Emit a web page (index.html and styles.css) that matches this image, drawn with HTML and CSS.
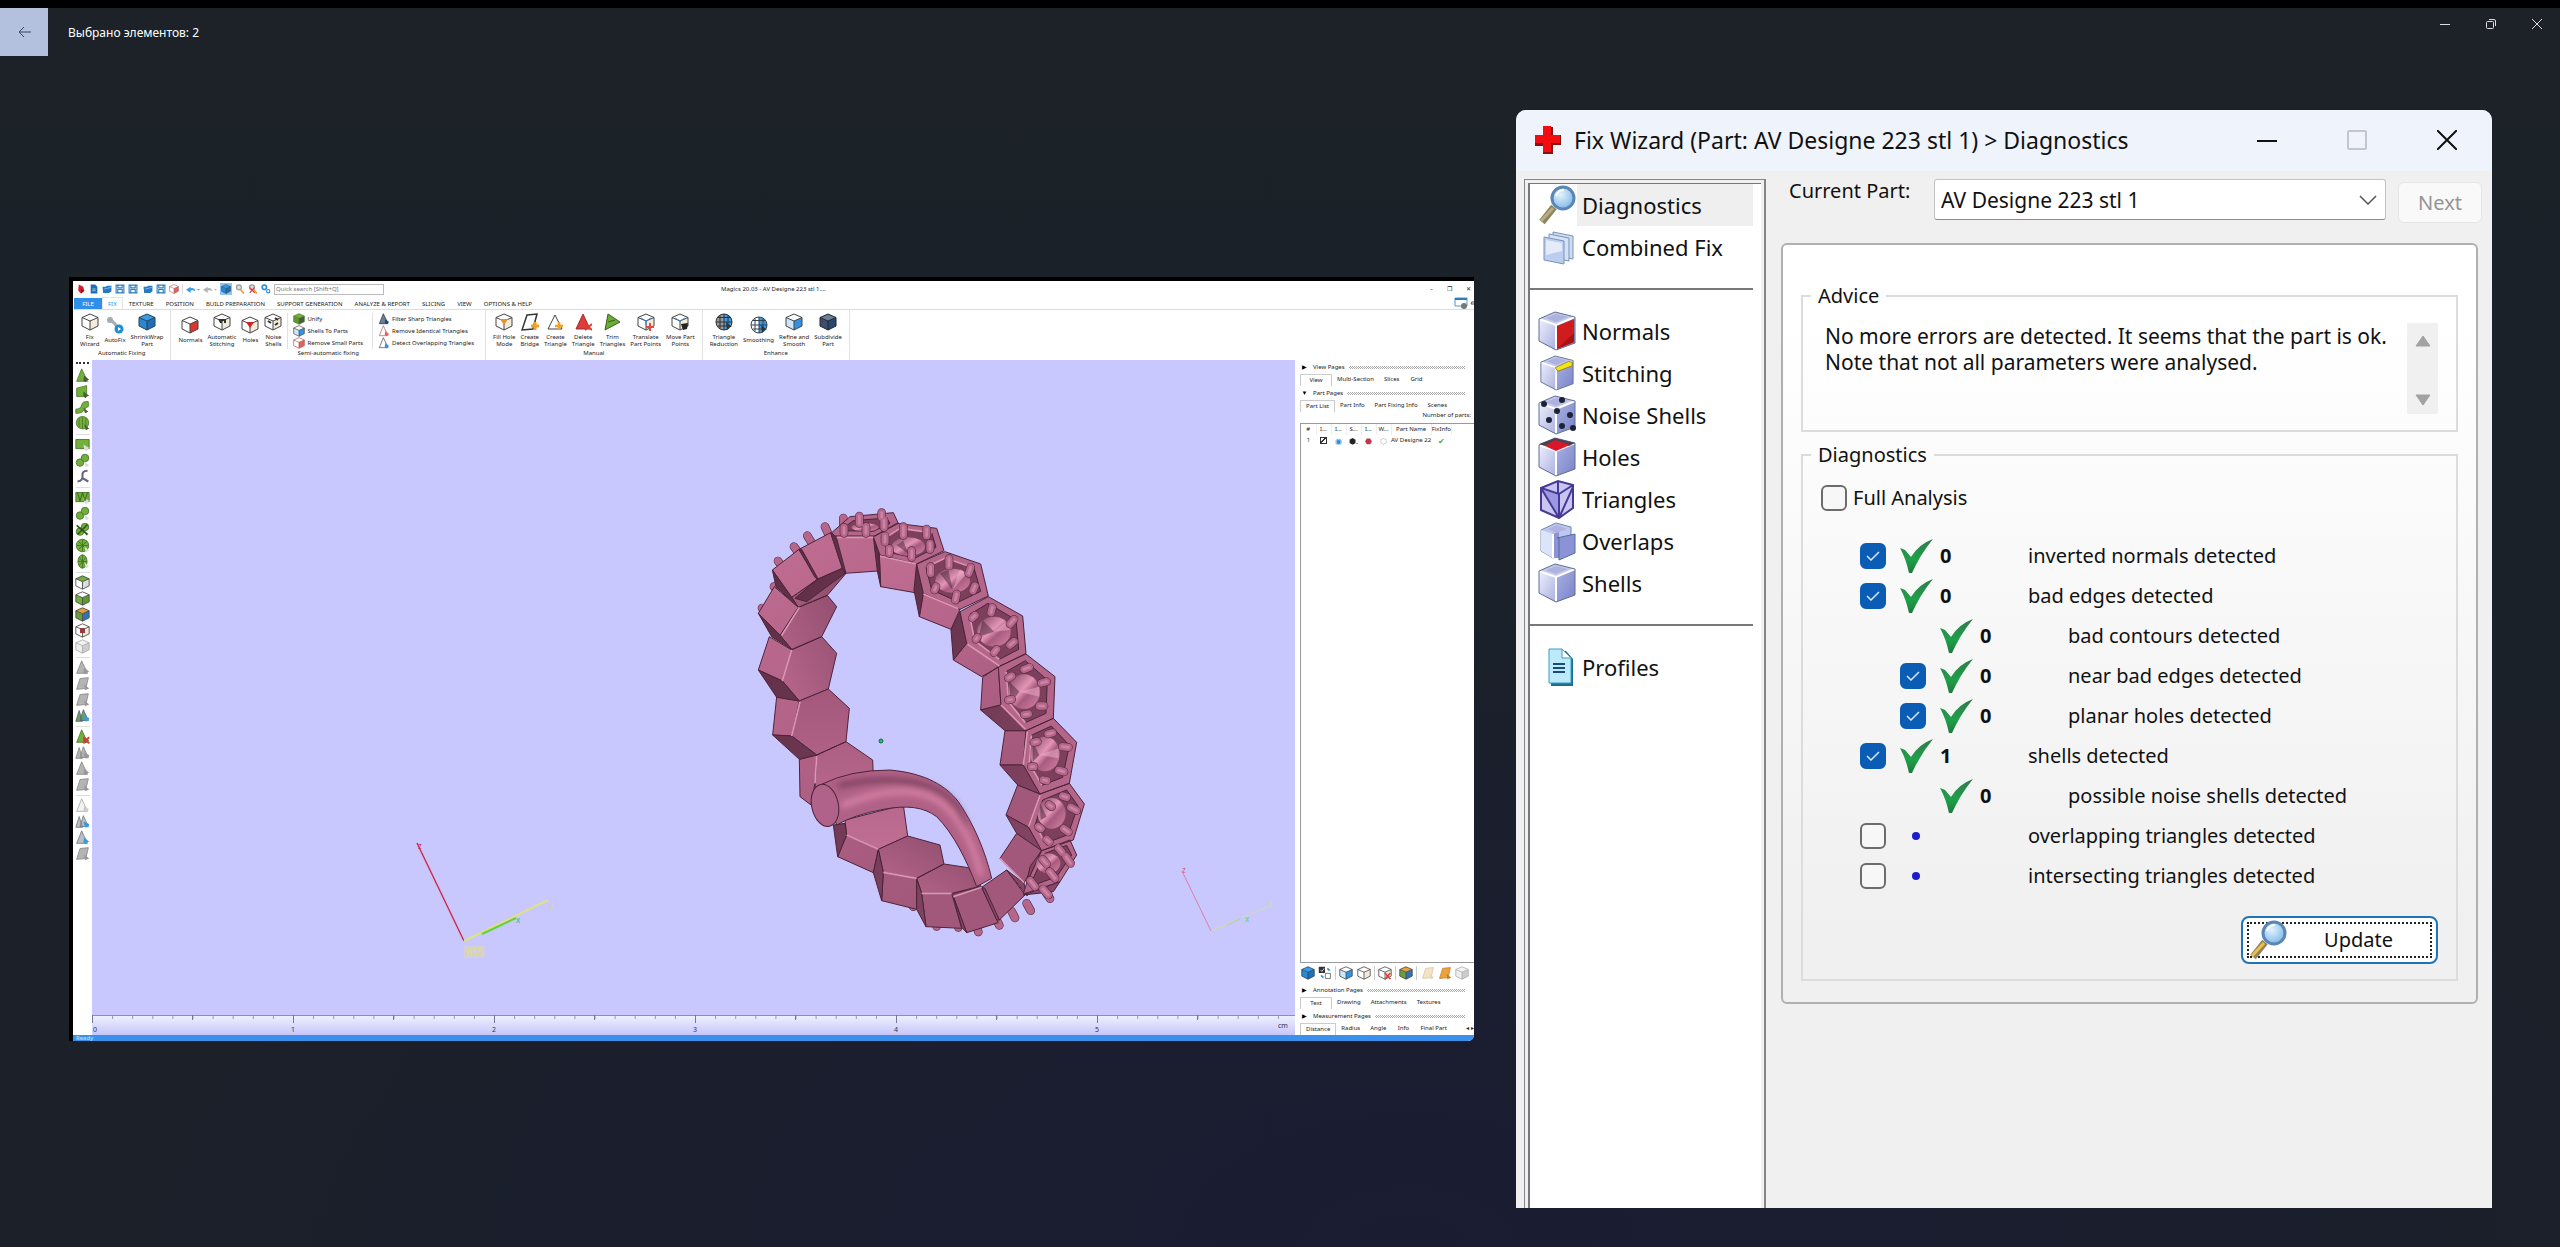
FILE: index.html
```html
<!DOCTYPE html>
<html lang="ru">
<head>
<meta charset="utf-8">
<title>Выбрано элементов: 2</title>
<link rel="stylesheet" href="styles.css">
</head>
<body>
<svg class="defs" aria-hidden="true">
  <defs>
    <linearGradient id="faceFront" x1="0" y1="0" x2="0.4" y2="1"><stop offset="0" stop-color="#c06d92"/><stop offset="1" stop-color="#a2587b"/></linearGradient>
    <linearGradient id="faceInner" x1="1" y1="0" x2="0" y2="1"><stop offset="0" stop-color="#8a4a69"/><stop offset="1" stop-color="#b9678d"/></linearGradient>
    <linearGradient id="faceWarm" x1="0" y1="0" x2="0" y2="1"><stop offset="0" stop-color="#a3587b"/><stop offset="1" stop-color="#c06e93"/></linearGradient>
    <linearGradient id="faceDark" x1="0" y1="0" x2="1" y2="1"><stop offset="0" stop-color="#5a2c43"/><stop offset="1" stop-color="#8a4868"/></linearGradient>
    <linearGradient id="gem" x1="0" y1="0" x2="1" y2="1"><stop offset="0" stop-color="#7a3e5b"/><stop offset="0.45" stop-color="#e295b5"/><stop offset="0.6" stop-color="#a85b80"/><stop offset="1" stop-color="#d583a6"/></linearGradient>
    <linearGradient id="rule" x1="0" y1="0" x2="0" y2="1"><stop offset="0" stop-color="#f1f1ff"/><stop offset="1" stop-color="#c6c6fa"/></linearGradient>
    <linearGradient id="cubeLeft" x1="0" y1="0" x2="1" y2="1"><stop offset="0" stop-color="#eef0fc"/><stop offset="1" stop-color="#a9b0e0"/></linearGradient>
    <linearGradient id="cubeRight" x1="0" y1="0" x2="1" y2="1"><stop offset="0" stop-color="#aab2e4"/><stop offset="1" stop-color="#7a82c8"/></linearGradient>
    <radialGradient id="lens" cx="0.4" cy="0.35" r="0.7"><stop offset="0" stop-color="#e2f3fd"/><stop offset="1" stop-color="#7db6e8"/></radialGradient>
    <linearGradient id="tick" x1="0" y1="0" x2="0" y2="1"><stop offset="0" stop-color="#2f7a4c"/><stop offset="0.6" stop-color="#1fa04a"/><stop offset="1" stop-color="#1d7a3c"/></linearGradient>
    <filter id="soft"><feGaussianBlur stdDeviation="9"/></filter>
    <path id="backprongs" d="M310 84v22M255 110l10 22M202 137l12 20M162 170l12 16M114 213l12 16M102 290l8 8M66 354l4 4M590 1309v-12M655 1312v-12M715 1326l-4-16M778 1306l-6-12M825 1284l-10-20M872 1262l-12-22M930 1226l-16-24M520 1250v-8"/>
    <path id="prongs" d="M358 78v22M425 68v14M432 90v22M312 112v18M378 110v20M490 110v26M560 117v20M570 160v18M515 182v20M448 176v14M435 138v18M627 206v22M692 232l-6 18M705 288l-6 14M650 312l-4 18M588 290l-4 10M572 230v20M757 352l-4 16M822 388l-12 14M822 455l-12 10M770 478l-8 10M712 442l-4 6M705 376l-8 8M868 532l-16 6M920 575l-16 4M912 648l-14 0M865 672l-12 2M815 628l-10 2M815 558l-10 6M938 728l-14 4M985 772l-18-2M972 845l-16-4M920 872l-10-2M882 830l-8 0M892 755l-10 2M980 922l-12-4M1010 962l-18-10M985 1026l-14-10M928 1056l-8-8M903 1016l-8-6M935 950l-8-6M965 1086l-10-12M992 1120l-14-20M945 1165l-16-20M920 1122l-12-14M885 1190l-14-18M925 1215l-16-18"/>
  </defs>
  <symbol id="box" viewBox="0 0 18 18">
    <path d="M9 1 17 4.500 17 13 9 17 1 13 1 4.500Z" fill="#fff"/>
    <path class="t" d="M9 1 17 4.500 9 8 1 4.500Z"/><path class="l" d="M1 4.500 9 8 9 17 1 13Z"/><path class="r" d="M17 4.500 9 8 9 17 17 13Z"/>
    <path class="o" d="M9 1 17 4.500 17 13 9 17 1 13 1 4.500ZM1 4.500 9 8 17 4.500M9 8V17"/>
  </symbol>
  <symbol id="tri" viewBox="0 0 18 18"><path class="t o" d="M8 1 15 16 2 16Z"/><path class="r" d="M11 9 17 14 14 15 13 17 10 15Z"/></symbol>
  <symbol id="tris" viewBox="0 0 18 18"><path class="t o" d="M5 3 9 16H1ZM10 2 16 15H6Z"/><path class="r" d="M10 9 17 12 16 16 12 16Z"/></symbol>
  <symbol id="quad" viewBox="0 0 18 18"><path class="t o" d="M6 3 16 2 13 15 2 16Z"/><path class="r" d="M11 10 17 15 12 17Z"/></symbol>
  <symbol id="sheet" viewBox="0 0 18 18"><path class="t o" d="M2 5 14 2V15L2 15Z"/><path class="r" d="M10 9 17 14 14 15 13 17 10 15Z"/></symbol>
  <symbol id="rect" viewBox="0 0 18 18"><path class="t o" d="M1 3H17V14H1Z"/><path class="r" d="M10 9 17 13 14 17 11 15Z"/></symbol>
  <symbol id="wave" viewBox="0 0 18 18"><path class="t o" d="M1 11Q7 11 8 6T16 2V8Q13 8 11 12T1 16Z"/><path class="r" d="M10 9 16 14 12 16Z"/></symbol>
  <symbol id="blob" viewBox="0 0 18 18"><circle class="t o" cx="6" cy="11.500" r="4.500"/><circle class="t o" cx="12" cy="6" r="4.500"/><path class="r" d="M11 10 17 15 13 17Z"/></symbol>
  <symbol id="disc" viewBox="0 0 18 18"><circle class="t o" cx="9" cy="9" r="7.500"/><path class="o" d="M9 2V16M2 9H16M4 4 14 14M14 4 4 14"/><path class="r" d="M11 10 17 15 13 17Z"/></symbol>
  <symbol id="slices" viewBox="0 0 18 18"><circle class="t o" cx="9" cy="8" r="7.500"/><path class="o" d="M5 2V14M9 1V15M13 2V14"/><path class="r" d="M11 10 17 15 13 17Z"/></symbol>
  <symbol id="oval" viewBox="0 0 18 18"><ellipse class="t o" cx="9" cy="9" rx="5.500" ry="8"/><path class="o" d="M9 1V17M4 9H14M5 4 13 14M13 4 5 14"/><path class="r" d="M11 10 17 15 13 17Z"/></symbol>
  <symbol id="curve" viewBox="0 0 18 18"><path d="M3 15Q10 14 9 8T15 2M9 11 16 15" fill="none" stroke="#667" stroke-width="2.500"/></symbol>
  <symbol id="globe" viewBox="0 0 18 18"><circle cx="9" cy="9" r="8" class="l"/><path class="t" d="M9 1A8 8 0 0 1 9 17Z"/><path class="o" d="M9 1A8 8 0 0 1 9 17A8 8 0 0 1 9 1V17M1 9H17M3 4.500H15M3 13H15M5 2.500V15.500M13 2.500V15.500"/><path d="M11 9 17 14 14 14 12 17Z" fill="#333"/></symbol>
  <symbol id="disk" viewBox="0 0 18 18"><path d="M2 2H16V16H2ZM5 2V7H13V2M5 16V10H13V16" fill="none" stroke="#2c7dc0" stroke-width="2"/></symbol>
  <symbol id="page" viewBox="0 0 18 18"><path d="M3 1H11L15 5V17H3Z" fill="#1f6fb8"/><path d="M6 9H12M6 12H12" stroke="#fff"/></symbol>
  <symbol id="folder" viewBox="0 0 18 18"><path d="M1 5H7L9 3H17V13L13 16H2Z" fill="#2379c4"/><path d="M4 9 17 6" stroke="#bfe0ff"/></symbol>
  <symbol id="wrench" viewBox="0 0 18 18"><path d="M3 2 9 8 11 11" fill="none" stroke="#a5acb3" stroke-width="3"/><circle cx="4" cy="4" r="3" fill="#a5acb3"/><circle cx="13" cy="13" r="4.500" fill="#1b8fd8"/><path d="M12 11 15 13 12 15Z" fill="#fff"/></symbol>
  <symbol id="lens-s" viewBox="0 0 18 18"><path d="M10 10 16 17" stroke="#e0a23c" stroke-width="3"/><circle cx="7" cy="6" r="4.500" fill="#ddd" stroke="#999" stroke-width="2"/></symbol>
  <symbol id="gears" viewBox="0 0 18 18"><circle cx="6" cy="6" r="4" fill="none" stroke="#2a8fd6" stroke-width="3"/><circle cx="13" cy="13" r="3" fill="none" stroke="#2a8fd6" stroke-width="2"/></symbol>
  <symbol id="arrow" viewBox="0 0 18 10"><path d="M0 6 6 2V4Q11 3 12 8Q9 6 6 7V10ZM14 5H18L16 7Z" class="t"/></symbol>
  <symbol id="magnifier" viewBox="0 0 38 40">
    <path d="M16 22 4 37" stroke="#8d8560" stroke-width="7"/><path class="handle" d="M15 23 3 36" stroke-width="3"/>
    <circle cx="25" cy="13" r="11" fill="url(#lens)" stroke="#5a86b4" stroke-width="3"/><path d="M18 11Q20 5 26 5" fill="none" stroke="#fff" stroke-width="2"/>
  </symbol>
  <symbol id="cube" viewBox="0 0 38 40">
    <path d="M1 8 17 1 37 6 37 32 18 39 1 30Z" fill="#c9cff0"/>
    <path d="M1 8 17 1 37 6 18 14Z" fill="#c4c9ec"/><path d="M1 8 18 14V39L1 30Z" fill="url(#cubeLeft)"/><path d="M37 6 18 14V39L37 32Z" fill="url(#cubeRight)"/>
    <path d="M8 7 18 3 30 6 18 11Z" fill="#aeb2de"/>
    <path d="M1 8 18 14 37 6M18 14V39" fill="none" stroke="#fff" stroke-width="2"/>
    <path d="M1 8 17 1 37 6V32L18 39 1 30Z" fill="none" stroke="#5f6f90"/>
  </symbol>
  <symbol id="tickmark" viewBox="0 0 33 34"><path d="M0 9 5 11 11 18Q19 5 33 0Q20 16 12 34L9 34Q6 20 0 9Z" fill="url(#tick)"/></symbol>
</svg>

<header class="topbar">
  <button class="back" aria-label="Назад"><svg width="13" height="12" viewBox="0 0 13 12"><path d="M13 6H1M6 1 1 6 6 11" fill="none" stroke="#3a4560" stroke-width="1"/></svg></button>
  <h1 class="topbar-title">Выбрано элементов: 2</h1>
  <div class="winbtns">
    <button aria-label="Свернуть"><svg width="10" height="10"><path d="M0 5.500H10" stroke="#ddd"/></svg></button>
    <button aria-label="Восстановить"><svg width="10" height="10" fill="none" stroke="#ddd"><rect x="0.500" y="2.500" width="7" height="7" rx="1"/><path d="M3 .5H8Q9.500 .5 9.500 2V7"/></svg></button>
    <button aria-label="Закрыть"><svg width="10" height="10"><path d="M0 0 10 10M10 0 0 10" stroke="#ddd"/></svg></button>
  </div>
</header>

<main class="stage">
  <section class="shot" aria-label="Magics">
    <div class="app">
      <div class="app-title">
        <div class="quick">
          <svg class="qi" viewBox="0 0 18 18"><path d="M5 1 13 5 15 12 9 17 4 12Z" fill="#d5202a"/><path d="M9 9 15 12 9 17Z" fill="#8d1018"/></svg>
          <svg class="qi"><use href="#page"/></svg>
          <svg class="qi"><use href="#folder"/></svg>
          <svg class="qi"><use href="#disk"/></svg>
          <svg class="qi"><use href="#disk"/></svg>
          <svg class="qi wide"><use href="#folder"/></svg>
          <svg class="qi"><use href="#disk"/></svg>
          <svg class="qi c-rose"><use href="#box"/></svg>
          <i class="vsep"></i>
          <svg class="qa c-blue"><use href="#arrow"/></svg>
          <svg class="qa c-gray"><use href="#arrow"/></svg>
          <svg class="qi c-blue sel"><use href="#box"/></svg>
          <svg class="qi"><use href="#lens-s"/></svg>
          <svg class="qi" viewBox="0 0 18 18"><use href="#lens-s"/><path d="M3 6 12 16M12 6 3 16" stroke="#d33" stroke-width="2"/></svg>
          <svg class="qi"><use href="#gears"/></svg>
          <input class="qsearch" aria-label="Quick search" placeholder="Quick search [Shift+Q]">
        </div>
        <span class="app-name">Magics 20.03 - AV Designe 223 stl 1....</span>
        <span class="app-win"><span>–</span><span>❐</span><span>✕</span></span>
      </div>
      <nav class="tabs">
        <a class="file" href="#">FILE</a><a class="on" href="#">FIX</a><a href="#">TEXTURE</a><a href="#">POSITION</a><a href="#">BUILD PREPARATION</a><a href="#">SUPPORT GENERATION</a><a href="#">ANALYZE &amp; REPORT</a><a href="#">SLICING</a><a href="#">VIEW</a><a href="#">OPTIONS &amp; HELP</a>
        <svg class="panelbtn" viewBox="0 0 20 12"><path d="M1 1H13V9H1Z" fill="#fff" stroke="#4a9ad0"/><path d="M1 2H13" stroke="#2a7fc0" stroke-width="2"/><circle cx="10" cy="9" r="3" fill="#777"/><path d="M20 5Q17 4 17 7H20" fill="none" stroke="#555"/></svg>
      </nav>
      <div class="ribbon">
        <div class="group"><div class="tools">
          <button><svg class="ri c-plain"><use href="#box"/></svg>Fix<br>Wizard</button>
          <button><svg class="ri"><use href="#wrench"/></svg>AutoFix</button>
          <button><svg class="ri c-blue"><use href="#box"/></svg>ShrinkWrap<br>Part</button>
        </div><p>Automatic Fixing</p></div>
        <div class="group"><div class="tools">
          <button><svg class="ri c-red"><use href="#box"/></svg>Normals</button>
          <button><svg class="ri c-plain" viewBox="0 0 18 18"><use href="#box"/><path d="M5 6H13V10H11V8H9V10H7" fill="#333"/></svg>Automatic<br>Stitching</button>
          <button><svg class="ri c-plain" viewBox="0 0 18 18"><use href="#box"/><path d="M5 6H13L9 12Z" fill="#c22"/></svg>Holes</button>
          <button><svg class="ri c-plain" viewBox="0 0 18 18"><use href="#box"/><path d="M4 8 7 10M11 5 14 7M11 12 14 10" stroke="#333" stroke-width="2"/></svg>Noise<br>Shells</button>
          <div class="list">
            <button><svg class="li c-green"><use href="#box"/></svg>Unify</button>
            <button><svg class="li c-sky"><use href="#box"/></svg>Shells To Parts</button>
            <button><svg class="li c-rose"><use href="#box"/></svg>Remove Small Parts</button>
          </div>
          <div class="list">
            <button><svg class="li c-navy"><use href="#tri"/></svg>Filter Sharp Triangles</button>
            <button><svg class="li c-rose"><use href="#tri"/></svg>Remove Identical Triangles</button>
            <button><svg class="li c-sky"><use href="#tri"/></svg>Detect Overlapping Triangles</button>
          </div>
        </div><p>Semi-automatic fixing</p></div>
        <div class="group"><div class="tools">
          <button><svg class="ri c-plain" viewBox="0 0 18 18"><use href="#box"/><path d="M5 6H13L9 12Z" fill="#e8912c"/></svg>Fill Hole<br>Mode</button>
          <button><svg class="ri" viewBox="0 0 18 18"><path d="M6 2 16 1 12 16 1 17Z" fill="#fff" stroke="#333" stroke-width="1.500"/><path d="M14 9V17M10 13H18" stroke="#f0a02c" stroke-width="3"/></svg>Create<br>Bridge</button>
          <button><svg class="ri" viewBox="0 0 18 18"><path d="M9 2 16 16H2Z" fill="#fff" stroke="#444"/><path d="M13 9V17M9 13H17" stroke="#f0a02c" stroke-width="2.500"/></svg>Create<br>Triangle</button>
          <button><svg class="ri" viewBox="0 0 18 18"><path d="M9 1 16 16H2Z" fill="#e03b34" stroke="#933"/><path d="M11 11 18 17M18 11 11 17" stroke="#e03b34" stroke-width="2"/></svg>Delete<br>Triangle</button>
          <button><svg class="ri" viewBox="0 0 18 18"><path d="M5 1 17 9 2 17ZM5 9 12 7" fill="#6cab36" stroke="#35601c"/></svg>Trim<br>Triangles</button>
          <button><svg class="ri c-plain" viewBox="0 0 18 18"><use href="#box"/><path d="M4 5 9 8 14 5M9 8V12" fill="none" stroke="#38d"/><path d="M13 10V18M9 14H17" stroke="#e24a44" stroke-width="2"/></svg>Translate<br>Part Points</button>
          <button><svg class="ri c-plain" viewBox="0 0 18 18"><use href="#box"/><path d="M4 5 9 8 14 5" fill="none" stroke="#38d"/><path d="M10 11 17 10 16 16 12 17Z" fill="#222"/></svg>Move Part<br>Points</button>
        </div><p>Manual</p></div>
        <div class="group"><div class="tools">
          <button><svg class="ri c-globe"><use href="#globe"/></svg>Triangle<br>Reduction</button>
          <button><svg class="ri c-globe2"><use href="#globe"/></svg>Smoothing</button>
          <button><svg class="ri c-sky"><use href="#box"/></svg>Refine and<br>Smooth</button>
          <button><svg class="ri c-navy"><use href="#box"/></svg>Subdivide<br>Part</button>
        </div><p>Enhance</p></div>
      </div>
      <div class="work">
        <div class="rail">
          <i class="grip"></i>
          <svg class="c-green"><use href="#tri"/></svg><svg class="c-green"><use href="#sheet"/></svg><svg class="c-green"><use href="#wave"/></svg><svg class="c-green"><use href="#slices"/></svg>
          <i class="hsep"></i>
          <svg class="c-green2"><use href="#rect"/></svg><svg class="c-green2"><use href="#blob"/></svg><svg><use href="#curve"/></svg>
          <i class="hsep"></i>
          <svg class="c-green2" viewBox="0 0 18 18"><use href="#rect"/><path d="M3 3 6 13 9 3 12 13 15 3" fill="none" stroke="#2d5517"/></svg><svg class="c-green2"><use href="#blob"/></svg><svg class="c-green2" viewBox="0 0 18 18"><use href="#blob"/><path d="M2 4 15 15M3 15 15 3" stroke="#2d5517" stroke-width="2"/></svg><svg class="c-green2"><use href="#disc"/></svg><svg class="c-green2"><use href="#oval"/></svg>
          <i class="hsep"></i>
          <svg class="c-topgreen"><use href="#box"/></svg><svg class="c-sidegreen"><use href="#box"/></svg><svg class="c-multi"><use href="#box"/></svg><svg class="c-plain" viewBox="0 0 18 18"><use href="#box"/><path d="M6 6H12V12H6Z" fill="#844"/><path d="M6 7 12 12M12 7 6 12" stroke="#a33"/></svg><svg class="c-pale"><use href="#box"/></svg>
          <i class="hsep"></i>
          <svg class="c-gray"><use href="#tri"/></svg><svg class="c-gray"><use href="#quad"/></svg><svg class="c-gray"><use href="#quad"/></svg><svg class="c-teal"><use href="#tris"/></svg>
          <i class="hsep"></i>
          <svg class="c-green" viewBox="0 0 18 18"><use href="#tri"/><path d="M10 10 17 17M17 10 10 17" stroke="#e03b34" stroke-width="2.500"/></svg><svg class="c-gray"><use href="#tris"/></svg><svg class="c-gray"><use href="#tri"/></svg><svg class="c-gray"><use href="#quad"/></svg>
          <i class="hsep"></i>
          <svg class="c-pale"><use href="#tri"/></svg><svg class="c-skygray"><use href="#tris"/></svg><svg class="c-skygray"><use href="#tri"/></svg><svg class="c-gray"><use href="#quad"/></svg>
        </div>
        <svg class="scene" viewBox="0 0 1203 675" preserveAspectRatio="xMinYMin slice">
          <g transform="translate(648 130) scale(.33333)" stroke="#4c2338" stroke-width="3" stroke-linejoin="round">
            <g class="prong"><use href="#backprongs" class="prong-edge"/><use href="#backprongs" class="prong-body"/></g>
            <path fill="url(#faceInner)" d="M155 322 232 268 307 235 318 250 262 316 175 352ZM175 352 262 316 290 350 245 440 155 478 120 436ZM155 480 245 440 290 490 265 597 178 633 127 573Z"/>
            <path fill="url(#faceWarm)" d="M178 633 265 597 328 655 318 755 230 795 155 738ZM230 795 318 755 398 810 400 860 225 900ZM315 990 490 945 503 1038 415 1078 320 1035Z"/>
            <path fill="url(#faceInner)" d="M415 1078 503 1038 600 1065 612 1122 530 1165 430 1147ZM530 1165 612 1122 685 1133 722 1188 638 1210 545 1210Z"/>
            <path fill="url(#faceFront)" d="M285 138H405L415 243 315 250ZM177 178 272 128 307 235 232 268ZM97 240 177 178 232 268 155 322ZM55 370 103 290 175 352 120 436ZM55 540 88 440 155 480 127 573ZM98 735 110 620 178 633 155 738ZM178 808 230 795 225 880 213 945 180 920ZM293 1100 320 1035 415 1078 400 1148ZM430 1147 530 1165V1258L425 1232ZM545 1210H635L665 1315 558 1310ZM640 1220 725 1192 775 1298 680 1328ZM725 1192 800 1140 855 1215 778 1290ZM780 1105 830 1030 905 1080 852 1180Z"/>
            <path fill="url(#faceDark)" d="M97 240 155 322 175 352 108 290ZM55 370 120 436 155 478 95 440ZM55 540 127 573 178 633 110 622ZM98 735 155 738 230 795 178 808ZM280 1005 315 1000 320 1035 293 1100ZM415 1078 430 1147 425 1232 400 1148ZM530 1165 545 1210 558 1310 530 1258ZM638 1210 725 1190 640 1220ZM640 1220 680 1328 665 1312ZM725 1192 735 1195 778 1290 770 1290ZM177 178 185 178 235 268 225 262ZM272 128 288 138 318 250 307 235ZM800 1140 852 1180 862 1218ZM232 268 307 235 315 250 200 335 165 325Z"/>
            <path fill="url(#faceFront)" d="M418 195 530 222 525 308 422 290ZM550 310 660 358 633 418 538 380ZM680 460 778 530 725 560 640 510ZM775 530 783 645 722 660 728 562ZM795 722H858L850 825 780 825ZM833 885 900 912 866 1012 798 975Z"/>
            <path fill="url(#faceDark)" d="M400 140 418 195 422 290 412 243ZM530 222 550 310 538 380 522 300ZM660 365 680 460 640 510 633 420ZM783 645 858 722 795 722 722 660ZM780 825H850L900 912 833 885ZM798 975 866 1012 905 1082 830 1030ZM860 1180 905 1082 870 1130ZM850 1215 960 1175 940 1205Z"/>
            <path fill="#b4658a" d="M275 128 330 80 460 68 475 100 405 138H285ZM400 140 470 100 590 115 612 182 530 222 420 195ZM530 222 615 185 722 222 745 318 660 358 550 310ZM660 365 745 320 848 378 858 490 778 530 680 460ZM775 530 858 492 945 560 940 685 858 722 783 645ZM858 722 940 685 1010 757 988 880 900 912 850 825ZM900 912 988 880 1033 942 1000 1050 905 1082 866 1012ZM905 1082 990 1050 1010 1095 960 1175 850 1212 860 1180Z"/>
            <path fill="#7c405d" d="M300 122 340 92 440 84 450 100 400 124ZM434 145 480 115 575 128 588 172 526 204 440 186ZM558 232 616 204 702 234 722 304 656 336 575 300ZM688 374 744 340 828 390 836 478 778 508 704 452ZM798 545 856 512 922 570 918 670 856 698 806 636ZM874 736 934 708 988 766 968 862 906 886 868 820ZM908 930 980 900 1014 948 984 1034 916 1060 886 1004ZM915 1090 980 1066 995 1095 950 1160 870 1190 878 1168Z"/>
            <path d="M434 145 480 115 575 128M558 232 616 204 702 234M688 374 704 452 778 508M798 545 806 636 856 698M874 736 868 820 906 886M886 1004 916 1060M125 436 178 352M127 573 155 480M155 738 180 635M225 880 230 798M320 1035 415 1078M430 1147 530 1165M545 1210H635M640 1220 725 1192M290 142H400M420 198 528 222M550 312 655 356M682 462 778 528M783 645 856 718M850 825 862 725M866 1010 900 915M780 1105 852 1178" fill="none" stroke="#dc96b4" stroke-width="5"/>
            <g fill="url(#gem)" stroke="none"><ellipse cx="375" cy="112" rx="40" ry="12"/><ellipse cx="505" cy="170" rx="50" ry="28"/><ellipse cx="638" cy="272" rx="52" ry="36"/><ellipse cx="762" cy="425" rx="50" ry="45"/><ellipse cx="852" cy="605" rx="48" ry="52"/><ellipse cx="915" cy="792" rx="44" ry="52"/><ellipse cx="935" cy="970" rx="42" ry="46"/><ellipse cx="925" cy="1120" rx="36" ry="30"/></g>
            <path d="M638 300 600 250 625 240ZM762 425 716 440 728 390ZM838 605 812 640 808 575ZM898 795 878 815 878 755ZM920 980 902 990 900 940ZM505 192 470 165 490 152Z" fill="#4c2338" stroke="none" opacity=".5"/>
            <path d="M638 300 660 238 680 250ZM762 425 800 395 810 420ZM838 605 898 590 898 620ZM898 795 956 775 956 805Z" fill="#f0b4cc" stroke="none" opacity=".5"/>
            <g class="prong"><use href="#prongs" class="prong-edge"/><use href="#prongs" class="prong-body"/><use href="#prongs" class="prong-light"/></g>
            <path fill="#b06186" d="M245 883Q330 840 450 840C560 850 620 890 655 935C700 1000 735 1080 755 1165L710 1190C680 1110 640 1030 590 980C550 950 500 945 430 958Q340 975 290 1005Z"/>
            <g fill="none" stroke-linecap="round" filter="url(#soft)"><path d="M300 886Q460 852 565 890T680 1040" stroke="#733a56" stroke-width="14"/><path d="M310 945Q470 880 570 920T722 1150" stroke="#d37fa3" stroke-width="20"/></g>
            <ellipse cx="255" cy="946" rx="40" ry="64" transform="rotate(-12 255 946)" fill="#b0628a"/>
          </g>
          <circle cx="789" cy="381" r="2" fill="#4a8" stroke="#073"/>
          <g fill="none" stroke-width="1"><path d="M325 483 372 581" stroke="#e88aa8" stroke-width="2"/><path d="M325 483 372 581" stroke="#b02050"/><path d="M372 581 456 540" stroke="#e0e080" stroke-width="2"/><path d="M390 574 424 558" stroke="#5fd43c" stroke-width="2"/><path d="M1090 511 1119 571" stroke="#dd7f9f"/><path d="M1119 571 1177 546" stroke="#d9d9a8"/><path d="M1135 565 1150 558" stroke="#a8d8a8"/></g>
          <g class="axis"><text x="326" y="489" fill="#c03060">z</text><text x="457" y="548" fill="#d8d87a">y</text><text x="424" y="563" fill="#2fc46a">x</text><text x="1090" y="513" fill="#d0607f">z</text><text x="1153" y="562" fill="#5fd45f">x</text><text x="1176" y="546" fill="#d9d9a0">y</text>
            <rect x="372" y="586" width="21" height="12" fill="#d2d0dc"/><text x="373" y="595" fill="#dede7c">WCS</text></g>
          <rect y="655" width="1203" height="20" fill="url(#rule)"/><path d="M0 655.500H1203" stroke="#8f8fa8"/>
          <path d="M.5 655v8M201.500 655v8M402.500 655v8M603.500 655v8M804.500 655v8M1005.500 655v8M100.500 655v5M301.500 655v5M502.500 655v5M703.500 655v5M904.500 655v5M1105.500 655v5" stroke="#77779a"/>
          <path d="M0 657.500H1203" stroke="#77779a" stroke-width="3" stroke-dasharray="1 19.100" opacity=".7"/>
          <g class="nums"><text x="1" y="672">0</text><text x="199" y="672">1</text><text x="400" y="672">2</text><text x="601" y="672">3</text><text x="802" y="672">4</text><text x="1003" y="672">5</text><text x="1186" y="668">cm</text></g>
        </svg>
        <aside class="side">
          <h2 class="closed">View Pages</h2>
          <div class="subtabs"><a class="on" href="#">View</a><a href="#">Multi-Section</a><a href="#">Slices</a><a href="#">Grid</a></div>
          <h2 class="open">Part Pages</h2>
          <div class="subtabs"><a class="on" href="#">Part List</a><a href="#">Part Info</a><a href="#">Part Fixing Info</a><a href="#">Scenes</a></div>
          <p class="count">Number of parts:</p>
          <div class="parts">
            <table>
              <thead><tr><th>#</th><th>I...</th><th>I...</th><th>S...</th><th>I...</th><th>W...</th><th class="name">Part Name</th><th>FixInfo</th></tr></thead>
              <tbody><tr><td>1</td><td><input type="checkbox" class="mini" checked aria-label="Selected"></td><td class="eye">◉</td><td class="bk">⬢.</td><td class="rd">⬣</td><td class="gy">⬡</td><td class="name">AV Designe 22</td><td class="ok">✔</td></tr></tbody>
            </table>
          </div>
          <div class="iconrow">
            <svg class="c-blue"><use href="#box"/></svg><svg viewBox="0 0 18 18"><path d="M1 1H9V9H1Z" fill="#333"/><path d="M3 5 5 7 8 3" stroke="#fff" fill="none"/><path d="M9.500 9.500H16V16H9.500Z" fill="#fff" stroke="#555"/><path d="M12 3 15 6M4 12 7 15" stroke="#2a8fd6" stroke-width="2"/></svg><i></i>
            <svg class="c-sky"><use href="#box"/></svg><svg class="c-plain"><use href="#box"/></svg><i></i>
            <svg class="c-plain" viewBox="0 0 18 18"><use href="#box"/><path d="M9 9 16 17M16 9 9 17" stroke="#e03b34" stroke-width="2"/></svg><i></i>
            <svg class="c-multi"><use href="#box"/></svg><i></i>
            <svg class="c-cream"><use href="#quad"/></svg><svg class="c-orange"><use href="#quad"/></svg><svg class="c-pale"><use href="#box"/></svg>
          </div>
          <h2 class="closed">Annotation Pages</h2>
          <div class="subtabs"><a class="on" href="#">Text</a><a href="#">Drawing</a><a href="#">Attachments</a><a href="#">Textures</a></div>
          <h2 class="closed">Measurement Pages</h2>
          <div class="subtabs"><a class="on" href="#">Distance</a><a href="#">Radius</a><a href="#">Angle</a><a href="#">Info</a><a href="#">Final Part</a><span class="pager">◂ ▸</span></div>
        </aside>
      </div>
      <footer class="status">Ready</footer>
    </div>
  </section>

  <section class="wizard" aria-label="Fix Wizard">
    <header class="wz-title">
      <svg width="28" height="30" viewBox="0 0 28 30"><path d="M10 2H19V10H27V20H19V29H9V21H1V11H10Z" fill="#8e0f12"/><path d="M9 1H17V10H26V18H17V27H9V18H1V10H9Z" fill="#f20d10"/></svg>
      <h2>Fix Wizard (Part: AV Designe 223 stl 1) &gt; Diagnostics</h2>
      <div class="wz-btns">
        <button aria-label="Minimize"><svg width="20" height="20"><path d="M0 11H20" stroke="#111" stroke-width="2"/></svg></button>
        <button aria-label="Maximize" disabled><svg width="20" height="20"><rect x="1" y="1" width="18" height="18" rx="1" fill="none" stroke="#c3c6cf" stroke-width="2"/></svg></button>
        <button aria-label="Close"><svg width="20" height="20"><path d="M0 0 20 20M20 0 0 20" stroke="#111" stroke-width="2"/></svg></button>
      </div>
    </header>
    <div class="wz-body">
      <nav class="wz-nav">
        <div class="wz-list">
          <a class="on" href="#"><svg class="wi"><use href="#magnifier"/></svg><span>Diagnostics</span></a>
          <a href="#"><svg class="wi" viewBox="0 0 38 40" stroke="#7a93b5"><path d="M15 5 35 9V32L15 28Z" fill="#cfdcf4"/><path d="M11 7 31 11V34L11 30Z" fill="#d5e1f6"/><path d="M6 10 26 14V37L6 33Z" fill="#bccdef"/><path d="M8 13 24 16V24L8 28Z" fill="#e4ecfa" stroke="none"/></svg><span>Combined Fix</span></a>
          <hr>
          <a href="#"><svg class="wi" viewBox="0 0 38 40"><use href="#cube"/><path d="M19 15 36 8V31L19 38Z" fill="#d01c1c"/><path d="M19 38 36 31V22Z" fill="#a81414"/></svg><span>Normals</span></a>
          <a href="#"><svg class="wi small" viewBox="0 0 38 40"><use href="#cube"/><path d="M17 14 32 7 36 8V12L20 18Z" fill="#f6e31c" stroke="#8a8420"/></svg><span>Stitching</span></a>
          <a href="#"><svg class="wi" viewBox="0 0 38 40"><use href="#cube"/><g fill="#1c2238"><circle cx="6" cy="9" r="3"/><circle cx="24" cy="5" r="3"/><circle cx="19" cy="16" r="3"/><circle cx="11" cy="25" r="3"/><circle cx="32" cy="20" r="3"/><circle cx="24" cy="31" r="3"/><circle cx="35" cy="33" r="3"/></g></svg><span>Noise Shells</span></a>
          <a href="#"><svg class="wi" viewBox="0 0 38 40"><use href="#cube"/><path d="M1 7 17 1 37 6 31 9 18 4 7 9Z" fill="#4b4250"/><path d="M7 9 17 3 32 8 18 14Z" fill="#d8182a"/></svg><span>Holes</span></a>
          <a href="#"><svg class="wi" viewBox="0 0 38 40"><path d="M3 9 20 2 35 6V29L21 39 3 31Z" fill="#c9c5f2"/><path d="M3 11 21 39V15Z" fill="#9c99e2"/><path d="M3 9 20 2 35 6V29L21 39 3 31ZM3 9 21 15 35 6M21 15V39L3 9M21 39 35 8M20 2V14" fill="none" stroke="#463a94" stroke-width="2"/></svg><span>Triangles</span></a>
          <a href="#"><svg class="wi" viewBox="0 0 38 40"><path d="M3 9 18 2 33 6V30L15 37 3 30Z" fill="#bcc8ee" stroke="#6b86ac"/><path d="M3 9 15 13V37L3 30Z" fill="#dce4fa"/><path d="M15 13 21 11V37H15Z" fill="#8b93d6"/><path d="M15 13V37" stroke="#fff" stroke-width="2"/><path d="M10 8 19 4 29 8 18 12Z" fill="#b3b0e2"/><path d="M19 17 37 13V32L21 39V17Z" fill="#8b93d6" stroke="#4f709c"/></svg><span>Overlaps</span></a>
          <a href="#"><svg class="wi"><use href="#cube"/></svg><span>Shells</span></a>
          <hr>
          <a href="#"><svg class="wi" viewBox="0 0 38 40"><path d="M13 4H28L35 12V39H13Z" fill="#1a6f96"/><path d="M11 2H24L33 11V36H11Z" fill="#bdeafb" stroke="#3a9cc4"/><path d="M24 2V11H33Z" fill="#fff" stroke="#3a9cc4"/><path d="M15 17H27M15 21H27M15 25H27" stroke="#1a4a78" stroke-width="2"/></svg><span>Profiles</span></a>
        </div>
      </nav>
      <div class="wz-main">
        <div class="wz-pick">
          <label for="part">Current Part:</label>
          <select id="part"><option>AV Designe 223 stl 1</option></select>
          <button class="next" disabled>Next</button>
        </div>
        <div class="card">
          <fieldset class="advice">
            <legend>Advice</legend>
            <div class="advice-row">
              <p>No more errors are detected. It seems that the part is ok.<br>Note that not all parameters were analysed.</p>
              <div class="scroll"><svg width="16" height="12"><path d="M8 1 15 11H1Z" fill="#a2a2a2" stroke="#a2a2a2" stroke-linejoin="round"/></svg><svg width="16" height="12"><path d="M8 11 15 1H1Z" fill="#a2a2a2" stroke="#a2a2a2" stroke-linejoin="round"/></svg></div>
            </div>
          </fieldset>
          <fieldset class="diag">
            <legend>Diagnostics</legend>
            <div class="checks">
              <label class="full"><input type="checkbox">Full Analysis</label>
              <label class="row"><input type="checkbox" checked><svg><use href="#tickmark"/></svg><b>0</b><span>inverted normals detected</span></label>
              <label class="row"><input type="checkbox" checked><svg><use href="#tickmark"/></svg><b>0</b><span>bad edges detected</span></label>
              <div class="row in"><i></i><svg><use href="#tickmark"/></svg><b>0</b><span>bad contours detected</span></div>
              <label class="row in"><input type="checkbox" checked><svg><use href="#tickmark"/></svg><b>0</b><span>near bad edges detected</span></label>
              <label class="row in"><input type="checkbox" checked><svg><use href="#tickmark"/></svg><b>0</b><span>planar holes detected</span></label>
              <label class="row"><input type="checkbox" checked><svg><use href="#tickmark"/></svg><b>1</b><span>shells detected</span></label>
              <div class="row in"><i></i><svg><use href="#tickmark"/></svg><b>0</b><span>possible noise shells detected</span></div>
              <label class="row"><input type="checkbox"><i class="dot"></i><b></b><span>overlapping triangles detected</span></label>
              <label class="row"><input type="checkbox"><i class="dot"></i><b></b><span>intersecting triangles detected</span></label>
              <button class="update"><span><svg class="wi gold"><use href="#magnifier"/></svg><em>Update</em></span></button>
            </div>
          </fieldset>
        </div>
      </div>
    </div>
  </section>
</main>
</body>
</html>
```
FILE: styles.css
```css
* { box-sizing: border-box; }

body {
  margin: 0;
  min-height: 100vh;
  display: flex;
  flex-direction: column;
  border-top: 8px solid #000;
  background:
    radial-gradient(ellipse 50% 60% at 55% 100%, #1a1c33 0%, rgba(26, 28, 51, 0) 100%),
    linear-gradient(#1c2228, #1b2029);
  font-family: "Noto Sans", "Open Sans", sans-serif;
  color: #111;
}

h1, h2, p { margin: 0; font-weight: 400; }
button { font: inherit; color: inherit; border: 0; background: none; padding: 0; }
a { color: inherit; text-decoration: none; }
svg { display: block; flex: none; }
.defs { position: absolute; width: 0; height: 0; }

/* Viewer header */
.topbar { display: flex; height: 48px; color: #fff; }
.back { width: 48px; height: 48px; background: #b3c1df; display: grid; place-items: center; }
.topbar-title { flex: 1; padding-left: 20px; font-size: 12px; line-height: 50px; }
.winbtns { display: flex; height: 32px; }
.winbtns button { width: 46px; display: grid; place-items: center; }

.stage {
  flex: 1;
  display: grid;
  grid-template-columns: 1405fr 976fr;
  gap: 42px;
  padding: 54px 68px 39px 69px;
}
.stage > * { min-width: 0; }

/* Modelling application */
.shot {
  align-self: center;
  aspect-ratio: 1405 / 764;
  display: flex;
  border: solid #000;
  border-width: 4px 0 0 4px;
  border-bottom-right-radius: 6px;
  overflow: hidden;
}
.app { flex: 1; min-width: 0; display: flex; flex-direction: column; background: #fff; font-size: 6px; line-height: 7px; color: #222; }

.t { fill: var(--t, none); }
.l { fill: var(--l, none); }
.r { fill: var(--r, none); }
.o { stroke: var(--o, #444); stroke-width: 1px; }
path.o:not(.t) { fill: none; }
.c-plain { --t: #fff; --l: #fff; --r: #f4ead8; }
.c-blue { --t: #3a9be8; --l: #2b86d4; --r: #1e6fb8; --o: #245; }
.c-sky { --t: #fff; --l: #cde6fb; --r: #2f93e0; }
.c-navy { --t: #6d7f92; --l: #3c4f66; --r: #24486e; --o: #223; }
.c-red { --t: #fff; --l: #fff; --r: #d9372e; }
.c-rose { --t: #fff; --l: #fff; --r: #e0655c; --o: #a55; }
.c-green { --t: #72b03c; --l: #5f9a30; --r: #4a5a3c; --o: #4d7a2a; }
.c-green2 { --t: #72b03c; --l: #5f9a30; --r: #d9dcd4; --o: #44702a; }
.c-topgreen { --t: #6fae40; --l: #fff; --r: #ddd; }
.c-sidegreen { --t: #fff; --l: #72b03c; --r: #5f9a30; }
.c-multi { --t: #e8a03c; --l: #6a9f40; --r: #2f74b8; }
.c-gray { --t: #b4b4b4; --l: #aaa; --r: #999; --o: #888; }
.c-pale { --t: #f2f2f2; --l: #eee; --r: #ccc; --o: #aaa; }
.c-teal { --t: #6aa05a; --l: #eee; --r: #3a9bd8; --o: #567; }
.c-skygray { --t: #b8bec4; --l: #eee; --r: #3a9bd8; --o: #778; }
.c-cream { --t: #f5e3c4; --r: #e5d5bb; --o: #d8c7a8; }
.c-orange { --t: #eda23c; --r: #c77d20; --o: #c0812c; }
.c-globe { --t: #3a9be8; --l: #999; --o: #333; }
.c-globe2 { --t: #3a9be8; --l: #fff; --o: #345; }

.app-title { display: grid; grid-template-columns: 1fr auto 1fr; align-items: center; height: 16px; }
.quick { display: flex; align-items: center; gap: 3px; padding-left: 3px; }
.qi { width: 10px; height: 10px; }
.qi.wide { margin-left: 2px; }
.qi.sel { width: 12px; height: 12px; padding: 1px; background: #8fc4f2; }
.qa { width: 14px; height: 8px; }
.vsep { width: 1px; height: 10px; background: #ddd; }
.qsearch { width: 110px; height: 11px; border: 1px solid #bbb; padding: 0 1px; font: 6px "Noto Sans", sans-serif; }
.app-win { display: flex; justify-content: flex-end; gap: 14px; padding-right: 3px; }

.tabs { display: flex; height: 13px; line-height: 14px; gap: 12px; border-bottom: 1px solid #ddd; }
.tabs a { white-space: nowrap; }
.tabs .file { width: 28px; background: #2f8fea; color: #fff; text-align: center; margin: 1px 0 0 1px; height: 11px; line-height: 12px; }
.tabs .on { padding: 0 5px; margin: 0 -6px 0 -12px; border: 1px solid #e4e4e4; border-bottom: 0; color: #2f8fea; line-height: 12px; }
.panelbtn { width: 20px; height: 12px; margin-left: auto; }

.ribbon { display: flex; height: 50px; }
.group { display: flex; flex-direction: column; justify-content: space-between; border-right: 1px solid #e2e2e2; padding: 3px 7px; }
.group p { text-align: center; }
.tools { display: flex; gap: 5px; }
.tools > button { display: block; min-width: 18px; height: 34px; text-align: center; white-space: nowrap; }
.ri { width: 18px; height: 18px; margin: 0 auto 3px; }
.list { display: flex; flex-direction: column; border-left: 1px solid #e2e2e2; padding: 0 4px 0 5px; }
.list button { display: flex; align-items: center; gap: 2px; height: 12px; white-space: nowrap; }
.li { width: 12px; height: 12px; }

.work { flex: 1; min-height: 0; display: grid; grid-template-columns: 19px 1fr 179px; }
.rail { display: flex; flex-direction: column; align-items: center; gap: 1px; padding-top: 2px; }
.rail svg { width: 15px; height: 15px; }
.grip { width: 13px; border-top: 2px dotted #333; margin-bottom: 3px; }
.hsep { width: 14px; height: 1px; background: #ddd; margin: 2px 0 1px; }
.scene { width: 100%; height: 100%; min-height: 0; background: #c8c8ff; }
.axis text { font-size: 8px; stroke: none; }
.nums text { font-size: 7px; fill: #334; }
.prong { fill: none; stroke-linecap: round; }
.prong-edge { stroke: #5c2d45; stroke-width: 26px; }
.prong-body { stroke: #b5678b; stroke-width: 22px; }
.prong-light { stroke: #cc82a3; stroke-width: 8px; }

.side { display: flex; flex-direction: column; padding-left: 5px; background: #fff; overflow: hidden; min-height: 0; }
.side h2 { display: flex; align-items: center; gap: 4px; height: 14px; font-size: 6px; flex: none; }
.side h2::before { content: "▶"; width: 9px; text-align: center; color: #000; }
.side h2.open::before { content: "▼"; }
.side h2::after { content: ""; flex: 1; height: 3px; margin-right: 9px; background: repeating-conic-gradient(#aaa 0 25%, #fff 0 50%) 0 0 / 2px 2px; }
.subtabs { display: flex; height: 12px; line-height: 11px; flex: none; white-space: nowrap; }
.subtabs a { padding: 0 5px; min-width: 24px; text-align: center; }
.subtabs .on { min-width: 32px; border: 1px solid #ccc; border-bottom: 0; }
.pager { margin-left: auto; }
.count { text-align: right; padding-right: 3px; height: 11px; }
.parts { flex: 1; min-height: 0; border: solid #999; border-width: 1px 0 1px 1px; }
.parts table { border-collapse: collapse; }
.parts th, .parts td { padding: 0; width: 15px; height: 11px; font-weight: 400; text-align: center; }
.parts .name { width: 40px; white-space: nowrap; }
.parts th { border-right: 1px solid #eee; }
.mini { appearance: none; display: block; width: 7px; height: 7px; margin: auto; border: 1px solid #333; background: linear-gradient(135deg, #fff 40%, #333 40% 60%, #fff 60%); }
.parts .eye, .parts .bk, .parts .rd, .parts .gy, .parts .ok { font-size: 8px; }
.eye { color: #2a8fd6; }
.rd { color: #c33650; }
.gy { color: #aaa; }
.ok { color: #4caf2e; }
.iconrow { display: flex; align-items: center; justify-content: space-between; height: 20px; padding: 0 5px 0 1px; flex: none; }
.iconrow svg { width: 14px; height: 14px; }
.iconrow i { width: 1px; height: 14px; background: #ccc; }
.status { height: 6px; background: #3a90ea; color: #cfe6ff; padding-left: 3px; overflow: hidden; }

/* Fix Wizard dialog */
.wizard { display: flex; flex-direction: column; background: #f0f0f0; border-radius: 10px 10px 0 0; overflow: hidden; font-size: 20px; line-height: 26px; }
.wz-title { display: flex; align-items: center; height: 61px; padding: 0 0 2px 18px; background: #eff3fb; }
.wz-title h2 { flex: 1; padding-left: 12px; font-size: 23px; white-space: nowrap; }
.wz-btns { display: flex; height: 58px; }
.wz-btns button { width: 90px; display: grid; place-items: center; }

.wz-body { flex: 1; display: flex; gap: 15px; padding: 8px 10px 0 8px; }
.wz-nav { width: 242px; flex: none; display: flex; padding: 3px 3px 0; border: solid #85858a; border-width: 1px 2px 0 1px; }
.wz-list { flex: 1; border: solid #77777c; border-width: 1px 0 0 2px; background: #fff; padding: 0 8px 0 8px; }
.wz-list a { display: flex; align-items: center; height: 42px; font-size: 22px; }
.wz-list span { flex: 1; margin-left: 1px; padding-left: 5px; line-height: 42px; }
.wz-list .on span { background: #efefef; }
.wz-list hr { height: 42px; margin: 0 0 0 -8px; border: 0; background: linear-gradient(#77777c, #77777c) 0 20px / 100% 2px no-repeat; }
.wi { width: 38px; height: 40px; --h: #b7ad7e; }
.wi.small { width: 34px; height: 36px; margin: 0 2px; }
.wi.gold { --h: #f0bd4c; }
.handle { stroke: var(--h); }

.wz-main { flex: 1; min-width: 0; }
.wz-pick { display: flex; height: 44px; padding-left: 8px; }
.wz-pick label { width: 145px; line-height: 24px; flex: none; }
.wz-pick select {
  appearance: none; flex: 1; min-width: 0; height: 41px; margin-right: 12px; padding: 0 6px;
  border: 1px solid #c4c4c4; border-bottom-color: #8c8c8c; border-radius: 3px;
  font: inherit; font-size: 21px; color: #111;
  background: #fff url("data:image/svg+xml,%3Csvg xmlns='http://www.w3.org/2000/svg' width='18' height='10'%3E%3Cpath d='M1 1 9 9 17 1' fill='none' stroke='%23555' stroke-width='1.500'/%3E%3C/svg%3E") right 8px center no-repeat;
}
.next { width: 84px; height: 41px; margin-top: 3px; border: 1px solid #e6e6e6; border-radius: 6px; background: #f9f9f9; color: #949494; }

.card { margin: 20px 4px 0 0; padding: 38px 18px 21px; border: 2px solid #b0b0b0; border-radius: 6px; background: linear-gradient(#fff 10%, #f0f0f0 90%); }
fieldset { margin: 0; padding: 0; border: 2px solid #dcdcdc; min-width: 0; }
legend { margin-left: 8px; padding: 0 7px; height: 26px; }
.advice-row { display: flex; justify-content: space-between; padding: 14px 18px 16px 22px; font-size: 21px; }
.advice-row p { white-space: nowrap; }
.scroll { width: 31px; height: 91px; padding: 12px 0 8px; display: flex; flex-direction: column; justify-content: space-between; align-items: center; background: #f0f0f0; }

.diag { margin-top: 10px; }
.checks { display: flex; flex-direction: column; padding: 0 18px 15px; }
.full { display: flex; align-items: center; gap: 6px; height: 28px; margin: 16px 0 24px; }
.row { display: grid; grid-template-columns: 26px 60px 82px 1fr; align-items: center; height: 40px; padding-left: 39px; }
.row.in { padding-left: 79px; }
.row svg { width: 33px; height: 34px; }
.row svg, .row .dot { justify-self: center; }
.row b { margin-left: -6px; }
.dot { width: 8px; height: 8px; border-radius: 4px; background: #1c1ccb; }
.diag input { appearance: none; margin: 0; width: 26px; height: 26px; border: 2px solid #6c6c6c; border-radius: 6px; background: #f7f7f7; }
.diag input:checked { border-color: #0a5cb4; background: #0a5cb4 url("data:image/svg+xml,%3Csvg xmlns='http://www.w3.org/2000/svg' width='14' height='10'%3E%3Cpath d='M1 5 5 9 13 1' fill='none' stroke='%23d8e8f8' stroke-width='1.500'/%3E%3C/svg%3E") center no-repeat; }
.update { align-self: flex-end; width: 197px; height: 48px; margin: 20px 0 0; padding: 4px; border: 2px solid #1f74b8; border-radius: 8px; background: #fff; }
.update span { display: flex; align-items: center; height: 100%; border: 2px dotted #222; }
.update em { flex: 1; font-style: normal; text-align: center; }
```
